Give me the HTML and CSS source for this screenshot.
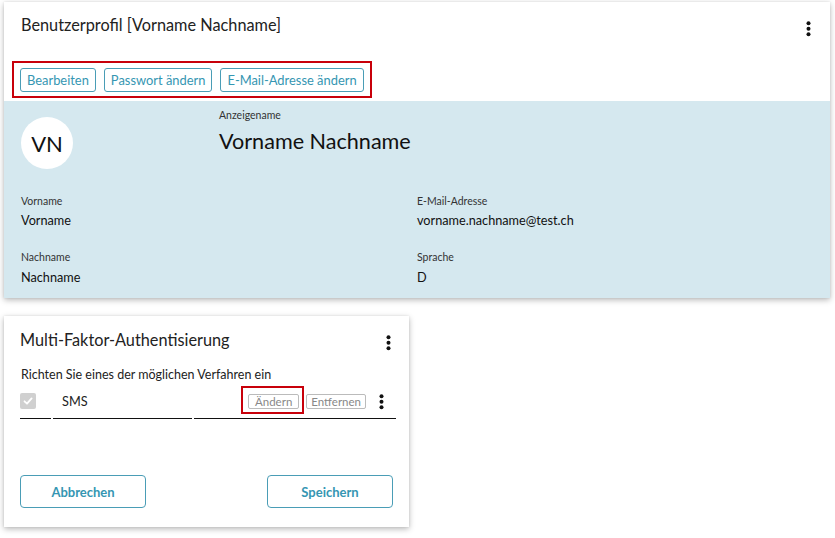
FILE: index.html
```html
<!DOCTYPE html>
<html lang="de">
<head>
<meta charset="utf-8">
<title>Benutzerprofil</title>
<link rel="stylesheet" href="styles.css">
</head>
<body>
<div class="page">
  <section class="card profile">
    <div class="card-head">
      <h1 class="card-title">Benutzerprofil [Vorname Nachname]</h1>
      <span class="kebab"><svg width="5" height="16" viewBox="0 0 5 16"><circle cx="2.5" cy="2.3" r="2"/><circle cx="2.5" cy="7.8" r="2"/><circle cx="2.5" cy="13.3" r="2"/></svg></span>
    </div>
    <div class="toolbar">
      <button class="btn-outline">Bearbeiten</button>
      <button class="btn-outline">Passwort ändern</button>
      <button class="btn-outline">E-Mail-Adresse ändern</button>
    </div>
    <div class="profile-body">
      <div class="profile-top">
        <div class="avatar">VN</div>
        <div class="display">
          <div class="label">Anzeigename</div>
          <div class="display-name">Vorname Nachname</div>
        </div>
      </div>
      <div class="fields">
        <div class="field"><div class="label">Vorname</div><div class="value">Vorname</div></div>
        <div class="field"><div class="label">E-Mail-Adresse</div><div class="value">vorname.nachname@test.ch</div></div>
        <div class="field"><div class="label">Nachname</div><div class="value">Nachname</div></div>
        <div class="field"><div class="label">Sprache</div><div class="value">D</div></div>
      </div>
    </div>
  </section>

  <section class="card mfa">
    <div class="card-head mfa-head">
      <h2 class="card-title">Multi-Faktor-Authentisierung</h2>
      <span class="kebab"><svg width="5" height="16" viewBox="0 0 5 16"><circle cx="2.5" cy="2.3" r="2"/><circle cx="2.5" cy="7.8" r="2"/><circle cx="2.5" cy="13.3" r="2"/></svg></span>
    </div>
    <p class="hint">Richten Sie eines der möglichen Verfahren ein</p>
    <div class="method-row">
      <div class="cell cell-check">
        <span class="checkbox"><svg width="12" height="12" viewBox="0 0 12 12"><path d="M2.5 6.3 L5 8.7 L9.6 3.4" fill="none" stroke="#fff" stroke-width="1.8" stroke-linecap="round" stroke-linejoin="round"/></svg></span>
      </div>
      <div class="cell cell-name">SMS</div>
      <div class="cell cell-actions">
        <span class="highlight"><button class="btn-small">Ändern</button></span>
        <button class="btn-small">Entfernen</button>
        <span class="kebab row-kebab"><svg width="5" height="16" viewBox="0 0 5 16"><circle cx="2.5" cy="2.3" r="2"/><circle cx="2.5" cy="7.8" r="2"/><circle cx="2.5" cy="13.3" r="2"/></svg></span>
      </div>
    </div>
    <div class="actions">
      <button class="btn-action">Abbrechen</button>
      <button class="btn-action">Speichern</button>
    </div>
  </section>
</div>
</body>
</html>
```

FILE: styles.css
```css
* { box-sizing: border-box; }
html, body { margin: 0; padding: 0; background: #fff; }
body {
  font-family: Lato, "Noto Sans", sans-serif;
  color: #222;
  width: 835px;
  height: 538px;
  overflow: hidden;
}
.page {
  padding: 2px 5px 0 4px;
  display: flex;
  flex-direction: column;
  align-items: flex-start;
  gap: 18px;
}
.card {
  background: #fff;
  box-shadow: 0 2px 6px rgba(0,0,0,0.28), 0 0 2px rgba(0,0,0,0.08);
}
.profile { width: 826px; height: 296px; }
.card-head {
  display: flex;
  justify-content: space-between;
  align-items: flex-start;
  padding: 13px 19px 0 17px;
  height: 34px;
}
.card-title {
  margin: 0;
  font-size: 16.3px;
  font-weight: 400;
  line-height: 20px;
  color: #222;
}
.kebab { display: flex; padding-top: 6px; }
.kebab svg { fill: #111; display: block; }
.toolbar {
  margin: 25px 0 0 8px;
  width: fit-content;
  border: 2px solid #c8000a;
  padding: 5px 6px 4px 6px;
  display: flex;
  gap: 8px;
}
.btn-outline {
  flex-shrink: 0;
  white-space: nowrap;
  font-family: Lato, sans-serif;
  font-size: 12.9px;
  color: #3596b2;
  background: #fff;
  border: 1px solid #4a9db6;
  border-radius: 3px;
  height: 24px;
  padding: 0 6px;
  line-height: 22px;
}
.profile-body {
  margin-top: 3px;
  background: #d5e8ef;
  padding: 7px 16px 12px 17px;
  height: 197px;
}
.profile-top {
  display: flex;
  align-items: flex-start;
}
.avatar {
  width: 52px;
  height: 52px;
  margin-top: 9px;
  border-radius: 50%;
  background: #fff;
  display: flex;
  align-items: center;
  justify-content: center;
  font-size: 22px;
  color: #111;
}
.display { margin-left: 146px; }
.label {
  font-size: 10.5px;
  line-height: 14px;
  color: #333;
}
.display-name {
  font-size: 21.6px;
  line-height: 28px;
  margin-top: 5px;
  color: #111;
}
.fields {
  margin-top: 25px;
  display: grid;
  grid-template-columns: 396px 1fr;
  row-gap: 21px;
}
.value {
  font-size: 12.7px;
  line-height: 18px;
  margin-top: 3px;
  color: #111;
}
.field:nth-child(n+3) .value { margin-top: 4px; }
.mfa { width: 405px; height: 211px; display: flex; flex-direction: column; }
.mfa-head { padding: 14px 18px 0 16px; height: 36px; }
.mfa-head .kebab { padding-top: 5px; }
.hint {
  margin: 14px 0 0 17px;
  font-size: 12.5px;
  line-height: 18px;
  color: #222;
}
.method-row {
  margin: 0 13px 0 16px;
  display: flex;
  height: 35px;
  align-items: center;
}
.cell {
  height: 100%;
  display: flex;
  align-items: center;
  border-bottom: 1.5px solid #111;
}
.cell-check { width: 31px; margin-right: 2px; }
.cell-name { width: 139px; padding-left: 9px; font-size: 12.7px; color: #222; margin-right: 2px; }
.cell-actions { flex: 1; justify-content: flex-end; padding-right: 12px; }
.checkbox {
  width: 16px;
  height: 16px;
  background: #d0d0d0;
  border-radius: 2px;
  display: flex;
  align-items: center;
  justify-content: center;
}
.highlight {
  border: 2px solid #c8000a;
  padding: 6px 3px 3px 5px;
  margin-right: 2px;
  display: flex;
  margin-top: -3px;
}
.btn-small {
  white-space: nowrap;
  font-family: Lato, sans-serif;
  font-size: 11.5px;
  color: #888;
  background: #fff;
  border: 1px solid #bbb;
  border-radius: 2px;
  height: 15px;
  line-height: 13px;
  padding: 0 4px;
}
.highlight .btn-small { padding: 0 6px; }
.row-kebab { margin-left: 13px; padding-top: 2px; }
.actions {
  margin-top: auto;
  padding: 0 16px 19px 16px;
  display: flex;
  justify-content: space-between;
}
.btn-action {
  width: 126px;
  height: 33px;
  font-family: Lato, sans-serif;
  font-size: 13px;
  font-weight: 700;
  color: #3596b2;
  background: #fff;
  border: 1px solid #4a9db6;
  border-radius: 4px;
}
```
